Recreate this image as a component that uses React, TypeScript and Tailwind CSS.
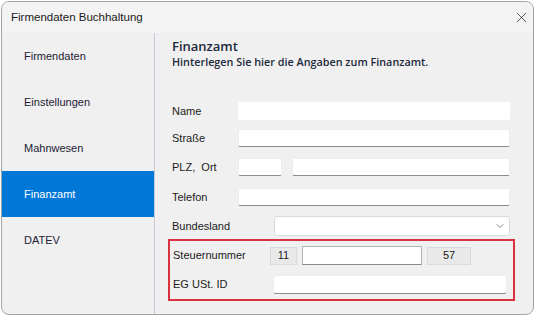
import { ChevronDown, X } from "lucide-react";

const sideItems = ["Firmendaten", "Einstellungen", "Mahnwesen", "Finanzamt", "DATEV"];

function TextInput({ className = "" }: { className?: string }) {
  return (
    <div
      className={`h-[18px] bg-white border border-[#ececec] border-b-[#8d8d8d] rounded-[2px] ${className}`}
    />
  );
}

function Row({
  label,
  className = "",
  children,
}: {
  label: string;
  className?: string;
  children: React.ReactNode;
}) {
  return (
    <div className={`flex items-center ${className}`}>
      <span className="w-[66px] shrink-0 text-[11px] text-[#1b1b1b] whitespace-pre">{label}</span>
      {children}
    </div>
  );
}

export default function App() {
  return (
    <div className="w-[536px] h-[317px] bg-white pt-px pl-px font-['Liberation_Sans',sans-serif]">
      <div className="w-[533px] h-[314px] flex flex-col border border-[#a3a3a3] rounded-[8px] bg-[#f0f0f0] overflow-hidden">
        {/* Title bar */}
        <div className="h-[31px] shrink-0 flex items-center justify-between pl-[9px] pr-[3px] bg-[#f3f3f3]">
          <span className="text-[11.5px] text-[#1a1a1a]">Firmendaten Buchhaltung</span>
          <X size={17} strokeWidth={1} className="text-[#1a1a1a]" />
        </div>

        {/* Body */}
        <div className="flex flex-1">
          {/* Sidebar */}
          <div className="w-[153px] shrink-0 flex flex-col border-r border-[#c7cadb]">
            {sideItems.map((item) => (
              <div
                key={item}
                className={`h-[46px] flex items-center pl-[22px] text-[11px] ${
                  item === "Finanzamt" ? "bg-[#0078d7] text-white" : "text-[#241a33]"
                }`}
              >
                {item}
              </div>
            ))}
          </div>

          {/* Content */}
          <div className="flex-1 flex flex-col pl-[17px] pr-[23px]">
            <div className="mt-[4px] text-[13px] leading-[18px] font-['Open_Sans',sans-serif] font-semibold text-[#1e2a3d]">
              Finanzamt
            </div>
            <div className="-mt-[1px] text-[10.8px] leading-[15px] font-['Open_Sans',sans-serif] font-semibold text-[#1e2a3d]">
              Hinterlegen Sie hier die Angaben zum Finanzamt.
            </div>

            <Row label="Name" className="mt-[33px]">
              <div className="flex-1 h-[18px] bg-white rounded-[2px]" />
            </Row>
            <Row label="Straße" className="mt-[9px]">
              <TextInput className="flex-1" />
            </Row>
            <Row label="PLZ,  Ort" className="mt-[11px]">
              <TextInput className="w-[44px]" />
              <TextInput className="flex-1 ml-[10px]" />
            </Row>
            <Row label="Telefon" className="mt-[12px]">
              <TextInput className="flex-1" />
            </Row>
            <Row label="Bundesland" className="mt-[10px]">
              <div className="flex-1 ml-[36px] h-[20px] bg-white border border-[#dadada] rounded-[3px] flex items-center justify-end pr-[3px]">
                <ChevronDown size={12} strokeWidth={1.3} className="text-[#444]" />
              </div>
            </Row>

            {/* Steuer box */}
            <div className="mt-[3px] -ml-[4px] -mr-[5px] h-[62px] border-2 border-[#d8313f] flex flex-col pl-[3px] pr-[6px]">
              <div className="flex items-center mt-[5px]">
                <span className="w-[97px] shrink-0 text-[11px] text-[#1b1b1b]">Steuernummer</span>
                <div className="w-[27px] h-[18px] bg-[#e9e9e9] border border-[#dadada] flex items-center justify-center text-[11px] text-[#1b1b1b]">
                  11
                </div>
                <div className="w-[120px] h-[19px] ml-[5px] bg-white border border-[#b4b4b4] border-b-[#8a8a8a]" />
                <div className="w-[44px] h-[18px] ml-[5px] bg-[#e9e9e9] border border-[#dadada] flex items-center justify-center text-[11px] text-[#1b1b1b]">
                  57
                </div>
              </div>
              <div className="flex items-center mt-[10px]">
                <span className="w-[100px] shrink-0 text-[11px] text-[#1b1b1b]">EG USt. ID</span>
                <div className="flex-1 h-[19px] bg-white border border-[#ececec] border-b-[#8d8d8d] rounded-[3px]" />
              </div>
            </div>
          </div>
        </div>
      </div>
    </div>
  );
}
